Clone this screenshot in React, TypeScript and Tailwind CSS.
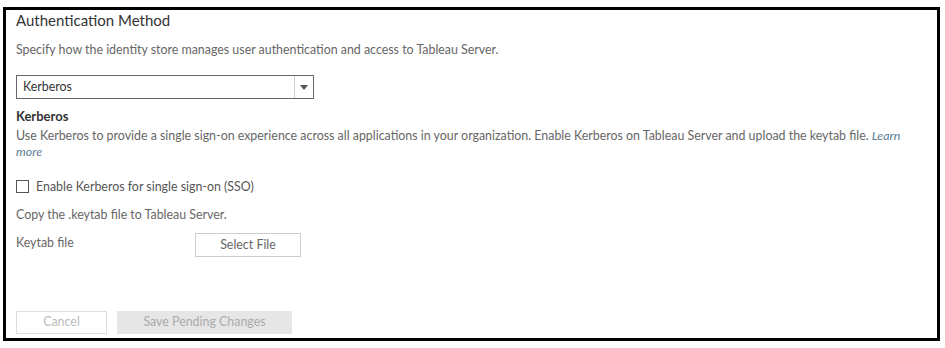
import { useState } from 'react'

const font = { fontFamily: 'Lato, "Open Sans", sans-serif' }

export default function App() {
  const [sso, setSso] = useState(false)

  return (
    <div className="w-[945px] h-[348px] bg-white pt-[7px] pl-[3px]" style={font}>
      <div className="w-[937px] h-[334px] border-[3px] border-black flex flex-col pl-[10px] pr-4">
        {/* 見出し */}
        <h1 className="text-[15px] leading-[18px] text-[#333] mt-[1px]">Authentication Method</h1>
        <p className="text-[12.4px] leading-[15px] text-[#666] mt-[13px]">
          Specify how the identity store manages user authentication and access to Tableau Server.
        </p>

        {/* ドロップダウン */}
        <div className="mt-[18px] w-[298px] h-[24px] border border-[#666] flex items-stretch">
          <span className="flex-1 text-[12.4px] leading-[22px] text-[#333] pl-[6px]">Kerberos</span>
          <span className="w-[19px] border-l border-[#ccc] flex items-center justify-center">
            <svg width="8" height="5" viewBox="0 0 8 5">
              <path d="M0 0h8L4 5z" fill="#555" />
            </svg>
          </span>
        </div>

        {/* Kerberos セクション */}
        <h2 className="text-[13px] leading-[16px] font-bold text-[#333] mt-[9px]">Kerberos</h2>
        <p className="text-[12.4px] leading-[16px] text-[#666] mt-[4px]">
          Use Kerberos to provide a single sign-on experience across all applications in your organization. Enable
          Kerberos on Tableau Server and upload the keytab file.{' '}
          <span className="italic text-[#5b7a94]">Learn more</span>
        </p>

        <label className="flex items-center gap-[7px] mt-[19px] text-[12.4px] leading-[15px] text-[#555]">
          <span
            onClick={() => setSso(!sso)}
            className="w-[13px] h-[13px] border border-[#555] bg-white"
          />
          Enable Kerberos for single sign-on (SSO)
        </label>

        <p className="text-[12.4px] leading-[15px] text-[#666] mt-[13px]">Copy the .keytab file to Tableau Server.</p>

        <div className="flex items-start mt-[11px]">
          <span className="w-[179px] text-[12.4px] leading-[15px] text-[#666] pt-[2px]">Keytab file</span>
          <button className="w-[106px] h-[24px] border border-[#ccc] text-[12.4px] text-[#666] bg-white">
            Select File
          </button>
        </div>

        {/* フッター */}
        <div className="mt-auto mb-[4px] flex gap-[10px]">
          <button className="w-[91px] h-[23px] border border-[#ddd] text-[12.4px] text-[#bbb] bg-white">Cancel</button>
          <button className="w-[175px] h-[23px] bg-[#e6e6e6] text-[12.4px] text-[#aaa]">Save Pending Changes</button>
        </div>
      </div>
    </div>
  )
}
